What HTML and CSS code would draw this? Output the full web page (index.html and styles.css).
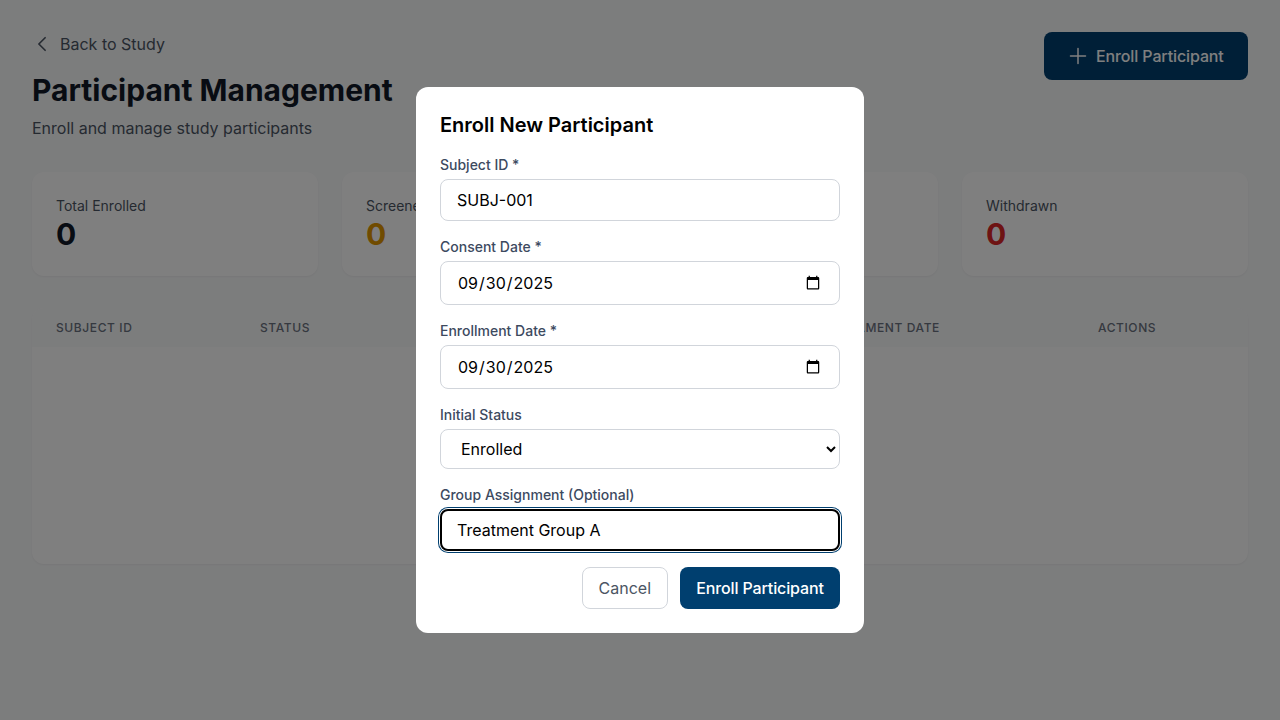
FILE: index.html
```html
<!DOCTYPE html>
<html lang="en">
<head>
  <meta charset="UTF-8" />
  <title>Participant Management</title>
  <link rel="stylesheet" href="styles.css">
</head>
<body>

  <div class="page">
    <div class="pageHeader">
      <div>
        <a class="backLink" href="#">
          <svg width="20" height="20" viewBox="0 0 24 24" fill="none" stroke="currentColor" stroke-width="2" stroke-linecap="round" stroke-linejoin="round"><path d="M15.75 19.5 8.25 12l7.5-7.5"/></svg>
          Back to Study
        </a>
        <h1>Participant Management</h1>
        <p class="subtitle">Enroll and manage study participants</p>
      </div>
      <button class="enrollBtn">
        <svg width="24" height="24" viewBox="0 0 24 24" fill="none" stroke="currentColor" stroke-width="1.5" stroke-linecap="round" stroke-linejoin="round"><path d="M12 4.5v15m7.5-7.5h-15"/></svg>
        Enroll Participant
      </button>
    </div>

    <div class="stats">
      <div class="statCard"><div class="statLabel">Total Enrolled</div><div class="statValue">0</div></div>
      <div class="statCard"><div class="statLabel">Screened</div><div class="statValue amber">0</div></div>
      <div class="statCard"><div class="statLabel">Active</div><div class="statValue green">0</div></div>
      <div class="statCard"><div class="statLabel">Withdrawn</div><div class="statValue red">0</div></div>
    </div>

    <div class="tableCard">
      <div class="tableHead">
        <span>Subject ID</span>
        <span>Status</span>
        <span>Group</span>
        <span>Consent Date</span>
        <span>Enrollment Date</span>
        <span>Actions</span>
      </div>
    </div>
  </div>

  <div class="overlay">
    <form class="modal">
      <h2>Enroll New Participant</h2>

      <div class="field">
        <label for="subjectId">Subject ID *</label>
        <input type="text" id="subjectId" value="SUBJ-001" />
      </div>
      <div class="field">
        <label for="consentDate">Consent Date *</label>
        <input type="date" id="consentDate" value="2025-09-30" />
      </div>
      <div class="field">
        <label for="enrollDate">Enrollment Date *</label>
        <input type="date" id="enrollDate" value="2025-09-30" />
      </div>
      <div class="field">
        <label for="initialStatus">Initial Status</label>
        <select id="initialStatus">
          <option>Enrolled</option>
          <option>Screened</option>
        </select>
      </div>
      <div class="field">
        <label for="groupName">Group Assignment (Optional)</label>
        <input type="text" id="groupName" value="Treatment Group A" autofocus />
      </div>

      <div class="modalActions">
        <button type="button" class="cancelBtn">Cancel</button>
        <button type="button" class="submitBtn">Enroll Participant</button>
      </div>
    </form>
  </div>

</body>
</html>
```

FILE: styles.css
```css
* {
  box-sizing: border-box;
}

body {
  margin: 0;
  font-family: Inter, sans-serif;
  background: #f9fafb;
  color: #111827;
}

.page {
  padding: 32px;
}

.pageHeader {
  display: flex;
  justify-content: space-between;
  align-items: flex-start;
  margin-bottom: 32px;
}

.backLink {
  display: flex;
  align-items: center;
  gap: 8px;
  height: 24px;
  margin-bottom: 16px;
  font-size: 16px;
  color: #4b5563;
  text-decoration: none;
}

h1 {
  margin: 0;
  font-size: 30px;
  line-height: 36px;
  font-weight: 700;
}

.subtitle {
  margin: 8px 0 0;
  font-size: 16px;
  line-height: 24px;
  color: #4b5563;
}

.enrollBtn {
  display: flex;
  align-items: center;
  gap: 6px;
  width: 204px;
  height: 48px;
  padding: 0 0 0 22px;
  border: none;
  border-radius: 8px;
  background: #003f6f;
  color: #fff;
  font-family: inherit;
  font-size: 16px;
  font-weight: 500;
  letter-spacing: -0.12px;
}

.stats {
  display: grid;
  grid-template-columns: repeat(4, 1fr);
  gap: 24px;
  margin-bottom: 32px;
}

.statCard {
  padding: 24px;
  border-radius: 12px;
  background: #fff;
  box-shadow: 0 1px 2px rgba(0, 0, 0, 0.05);
}

.statLabel {
  font-size: 14px;
  line-height: 20px;
  color: #4b5563;
}

.statValue {
  font-size: 30px;
  line-height: 36px;
  font-weight: 700;
}

.amber { color: #e09600; }
.green { color: #16a34a; }
.red { color: #dc2626; }

.tableCard {
  height: 256px;
  border-radius: 12px;
  background: #fff;
  box-shadow: 0 1px 2px rgba(0, 0, 0, 0.05);
  overflow: hidden;
}

.tableHead {
  display: grid;
  grid-template-columns: 204px 204px 175px 176px 283px 1fr;
  height: 39px;
  padding: 0 24px;
  align-items: center;
  background: #f9fafb;
  border-bottom: 1px solid #f9fafb;
  font-size: 12px;
  font-weight: 500;
  letter-spacing: 0.6px;
  text-transform: uppercase;
  color: #6b7280;
}

.overlay {
  position: fixed;
  top: 0;
  left: 0;
  width: 100%;
  height: 100%;
  background: rgba(0, 0, 0, 0.5);
  display: flex;
  justify-content: center;
  align-items: center;
}

.modal {
  width: 448px;
  padding: 24px;
  border-radius: 12px;
  background: #fff;
}

h2 {
  margin: 0 0 16px;
  font-size: 20px;
  line-height: 28px;
  font-weight: 600;
  color: #000;
}

.field {
  margin-bottom: 16px;
}

label {
  display: block;
  margin-bottom: 4px;
  font-size: 14px;
  line-height: 20px;
  font-weight: 500;
  color: #3d4a5f;
}

input, select {
  display: block;
  width: 100%;
  padding: 10px 16px;
  border: 1px solid #d1d5db;
  border-radius: 8px;
  background: #fff;
  font-family: inherit;
  font-size: 16px;
  color: #000;
}

select {
  padding: 8px 16px;
}

input:focus {
  border-color: transparent;
  outline: 2px solid #000;
  outline-offset: -2px;
  box-shadow: 0 0 0 1px #fff, 0 0 0 2px #003f6f;
}

.modalActions {
  display: flex;
  justify-content: flex-end;
  gap: 12px;
}

.modalActions button {
  height: 42px;
  border-radius: 8px;
  font-family: inherit;
  font-size: 16px;
}

.cancelBtn {
  padding: 0 16px;
  border: 1px solid #d1d5db;
  background: #fff;
  color: #4b5563;
  font-weight: 400;
}

.submitBtn {
  width: 160px;
  padding: 0;
  border: none;
  background: #003f6f;
  color: #fff;
  font-weight: 500;
  letter-spacing: -0.12px;
}
```
